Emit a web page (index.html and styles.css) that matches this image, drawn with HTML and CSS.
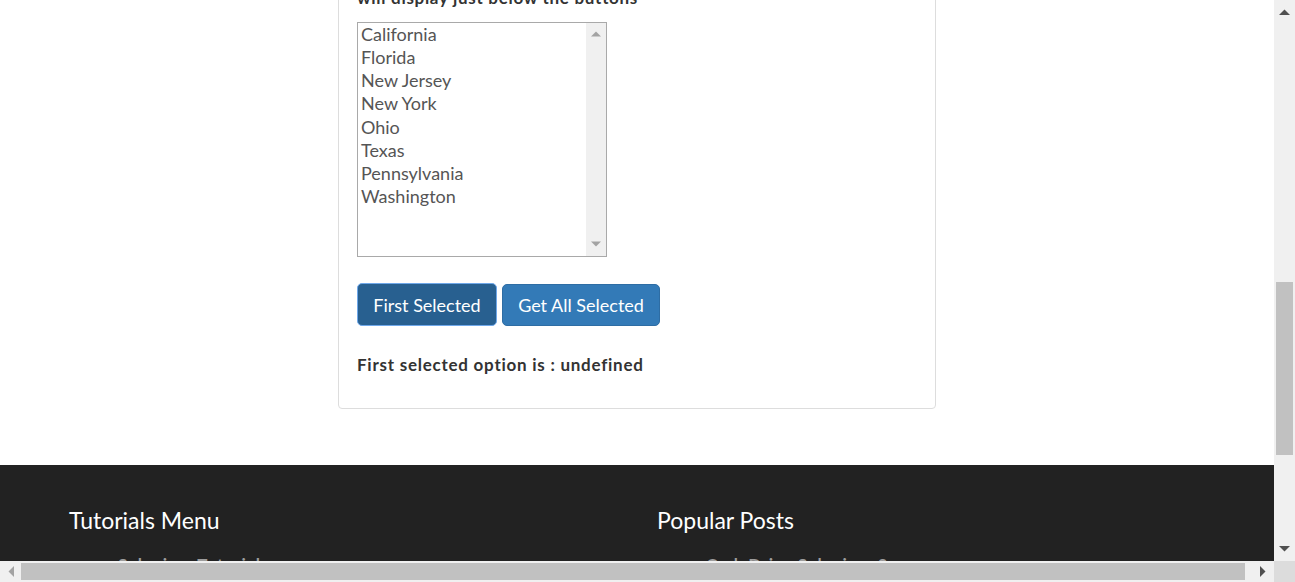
FILE: index.html
```html
<!DOCTYPE html>
<html lang="en">
<head>
<meta charset="utf-8">
<title>Get selected options</title>
<link rel="stylesheet" href="styles.css">
</head>
<body>
<div class="viewport">
  <div class="page">
    <main class="main">
      <section class="panel">
        <p class="intro">will display just below the buttons</p>
        <div class="listbox" role="listbox" aria-multiselectable="true">
          <div class="options">
            <div class="option" role="option">California</div>
            <div class="option" role="option">Florida</div>
            <div class="option" role="option">New Jersey</div>
            <div class="option" role="option">New York</div>
            <div class="option" role="option">Ohio</div>
            <div class="option" role="option">Texas</div>
            <div class="option" role="option">Pennsylvania</div>
            <div class="option" role="option">Washington</div>
          </div>
          <div class="list-scroll">
            <svg class="arrow" width="10" height="6" viewBox="0 0 10 6"><path d="M0 5.5 L5 0.5 L10 5.5 Z" fill="#a3a3a3"/></svg>
            <svg class="arrow" width="10" height="6" viewBox="0 0 10 6"><path d="M0 0.5 L5 5.5 L10 0.5 Z" fill="#a3a3a3"/></svg>
          </div>
        </div>
        <div class="buttons">
          <button class="btn btn-active" type="button">First Selected</button>
          <button class="btn btn-all" type="button">Get All Selected</button>
        </div>
        <p class="result">First selected option is : undefined</p>
      </section>
    </main>
    <footer class="footer">
      <div class="footer-col">
        <h3 class="footer-title">Tutorials Menu</h3>
        <ul class="footer-links">
          <li>Selenium Tutorials</li>
        </ul>
      </div>
      <div class="footer-col">
        <h3 class="footer-title">Popular Posts</h3>
        <ul class="footer-links">
          <li>CodeDrive Selenium 3</li>
        </ul>
      </div>
    </footer>
  </div>
  <div class="vscroll">
    <svg class="sarrow" width="11" height="6" viewBox="0 0 11 6"><path d="M0 6 L5.5 0.5 L11 6 Z" fill="#505050"/></svg>
    <div class="vtrack"><div class="vthumb"></div></div>
    <svg class="sarrow" width="11" height="6" viewBox="0 0 11 6"><path d="M0 0 L5.5 5.5 L11 0 Z" fill="#505050"/></svg>
  </div>
  <div class="hscroll">
    <svg class="harrow" width="6" height="11" viewBox="0 0 6 11"><path d="M6 0 L0.5 5.5 L6 11 Z" fill="#a3a3a3"/></svg>
    <div class="htrack"><div class="hthumb"></div></div>
    <svg class="harrow" width="6" height="11" viewBox="0 0 6 11"><path d="M0 0 L5.5 5.5 L0 11 Z" fill="#505050"/></svg>
  </div>
  <div class="corner"></div>
</div>
</body>
</html>
```

FILE: styles.css
```css
html, body {
  margin: 0;
  padding: 0;
  height: 100%;
  overflow: hidden;
}

body {
  font-family: "Lato", "Noto Sans", sans-serif;
  color: #333;
  background: #fff;
}

.viewport {
  display: grid;
  grid-template-columns: 1fr 21px;
  grid-template-rows: 1fr 21px;
  width: 1295px;
  height: 582px;
}

.page {
  overflow: hidden;
  display: flex;
  flex-direction: column;
  background: #fff;
}

.main {
  display: flex;
  justify-content: center;
  padding-bottom: 56px;
}

.panel {
  width: 598px;
  box-sizing: border-box;
  margin-top: -15px;
  border: 1px solid #ddd;
  border-radius: 4px;
  padding: 0 18px 31px 18px;
  background: #fff;
}

.intro {
  margin: 0;
  font-size: 17px;
  line-height: 24px;
  font-weight: 700;
  letter-spacing: 0.7px;
  color: #333;
}

.listbox {
  margin-top: 12px;
  width: 250px;
  height: 235px;
  box-sizing: border-box;
  border: 1px solid #a9a9a9;
  display: flex;
  background: #fff;
}

.options {
  flex: 1;
  padding: 0 0 0 3px;
}

.option {
  font-size: 18px;
  line-height: 23.15px;
  color: #555;
}

.list-scroll {
  width: 20px;
  background: #f0f0f0;
  display: flex;
  flex-direction: column;
  justify-content: space-between;
  align-items: center;
  padding: 8px 0 9px;
}

.arrow { display: block; }

.buttons {
  display: flex;
  gap: 5px;
  margin-top: 26px;
  align-items: flex-start;
}

.btn {
  font-family: inherit;
  font-size: 18px;
  height: 42px;
  padding: 0;
  color: #fff;
  background: #337ab7;
  border: 1px solid #2e6da4;
  border-radius: 5px;
  margin-top: 1px;
}

.btn-active {
  width: 140px;
  background: #286090;
  border-color: #6fa8ea;
  height: 43px;
  margin-top: 0;
}

.btn-all {
  width: 158px;
}

.result {
  margin: 27px 0 0;
  font-size: 17px;
  line-height: 24px;
  font-weight: 700;
  letter-spacing: 0.75px;
  color: #333;
}

.footer {
  flex: 1;
  background: #222;
  display: grid;
  grid-template-columns: 588px 1fr;
  padding: 41px 0 0 69px;
}

.footer-title {
  margin: 0;
  font-size: 23px;
  font-weight: 400;
  line-height: 28px;
  color: #fff;
}

.footer-links {
  list-style: none;
  margin: 19px 0 0;
  padding-left: 49px;
  font-size: 17px;
  font-weight: 700;
  color: #9d9d9d;
  line-height: 24px;
  letter-spacing: 0.7px;
}

.vscroll {
  background: #f0f0f0;
  display: flex;
  flex-direction: column;
  align-items: center;
}

.sarrow {
  display: block;
  margin: 9px 0;
}

.vtrack {
  flex: 1;
  width: 17px;
}

.vthumb {
  margin-top: 258px;
  height: 173px;
  background: #c1c1c1;
}

.hscroll {
  background: #f0f0f0;
  display: flex;
  align-items: center;
}

.harrow {
  display: block;
  margin: 0 8px;
}

.htrack {
  flex: 1;
  height: 17px;
  padding-right: 7px;
}

.hthumb {
  height: 100%;
  margin-left: -1px;
  background: #c1c1c1;
}

.corner {
  background: #dcdcdc;
}
```
